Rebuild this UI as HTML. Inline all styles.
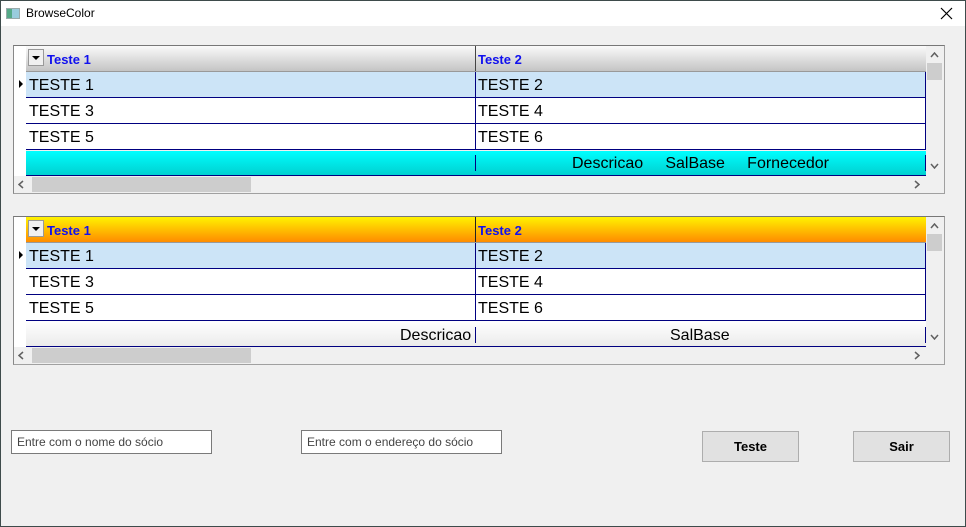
<!DOCTYPE html>
<html><head><meta charset="utf-8">
<style>
*{margin:0;padding:0;box-sizing:border-box}
body{width:966px;height:527px;overflow:hidden;background:#3e4b4b;font-family:"Liberation Sans",sans-serif;position:relative}
.win{position:absolute;left:1px;top:1px;width:964px;height:525px;background:#f0f0f0}
.title{position:absolute;left:0;top:0;width:964px;height:25px;background:#fff}
.title .ic{position:absolute;left:5px;top:7px;width:14px;height:11px;border:1px solid #9aa;background:linear-gradient(90deg,#5a8 0 40%,#9cd 40%)}
.title .t{position:absolute;left:25px;top:5px;font-size:12px;color:#000}
.a{position:absolute}
.grid{position:absolute;left:12px;width:932px;height:149px;border:1px solid #a0a0a0;border-top-color:#777;border-left-color:#888;background:#f0f0f0}
.ind{position:absolute;left:0;top:0;width:12px;height:130px;background:#fff}
.hdr{position:absolute;left:12px;top:0;width:912px;height:26px;border-bottom:1px solid #999}
.h1{background:linear-gradient(#fafafa,#c4c4c4)}
.h2{background:linear-gradient(#fff200,#ff8c00)}
.hl{position:absolute;top:6px;font-size:13px;font-weight:bold;color:#1010ee}
.dd{position:absolute;left:2px;top:3px;width:16px;height:17px;border:1px solid #999;background:#f0f0f0}
.dd:after{content:"";position:absolute;left:3px;top:6px;border-left:4px solid transparent;border-right:4px solid transparent;border-top:4px solid #000}
.row{position:absolute;left:12px;width:900px;height:26px;background:#fff;border-bottom:1px solid #000080;border-right:1px solid #000080}
.row.sel{background:#cce4f7}
.row span{position:absolute;top:5px;font-size:16px;color:#000}
.sep{position:absolute;left:449px;top:0;width:1px;height:100%;background:#000080}
.hs{position:absolute;left:0;top:130px;width:912px;height:17px;background:#f0f0f0}
.thumbh{position:absolute;left:18px;top:1px;width:219px;height:15px;background:#cdcdcd}
.vs{position:absolute;left:912px;top:0;width:18px;height:130px;background:#f0f0f0}
.thumbv{position:absolute;left:1px;top:17px;width:15px;height:17px;background:#cdcdcd}
.arr{position:absolute}
.inp{position:absolute;height:24px;width:201px;background:#fff;border:1px solid #7a7a7a;font-size:12px;color:#444;padding:4px 0 0 5px}
.btn{position:absolute;top:430px;width:97px;height:31px;background:#e1e1e1;border:1px solid #adadad;font-size:13px;font-weight:bold;text-align:center;line-height:29px;color:#000}
</style></head><body>
<div class="win">
<div class="title"><div class="ic"></div><div class="t">BrowseColor</div>
<svg class="a" style="left:939px;top:6px" width="13" height="13"><path d="M1 1L12 12M12 1L1 12" stroke="#000" stroke-width="1.2"/></svg></div>

<!-- grid 1 -->
<div class="grid" style="top:44px">
 <div class="ind"></div>
 <div class="hdr h1"><div class="dd"></div><div class="hl" style="left:21px">Teste 1</div><div class="sep" style="background:#444"></div><div class="hl" style="left:452px">Teste 2</div></div>
 <div class="a" style="left:5px;top:34px;border-top:4px solid transparent;border-bottom:4px solid transparent;border-left:4px solid #000"></div>
 <div class="row sel" style="top:26px"><span style="left:3px">TESTE 1</span><div class="sep"></div><span style="left:452px">TESTE 2</span></div>
 <div class="row" style="top:52px"><span style="left:3px">TESTE 3</span><div class="sep"></div><span style="left:452px">TESTE 4</span></div>
 <div class="row" style="top:78px"><span style="left:3px">TESTE 5</span><div class="sep"></div><span style="left:452px">TESTE 6</span></div>
 <div class="row" style="top:105px;height:25px;background:linear-gradient(#00ffff,#00d0d0);border-right:none;width:901px"><div class="sep" style="top:4px;height:16px"></div><div class="sep" style="left:899px;top:4px;height:16px"></div><span style="left:546px;top:4px">Descricao&nbsp;&nbsp;&nbsp;&nbsp;&nbsp;SalBase&nbsp;&nbsp;&nbsp;&nbsp;&nbsp;Fornecedor</span></div>
 <div class="hs"><svg class="arr" style="left:4px;top:4px" width="6" height="9"><path d="M5 1L1 4.5L5 8" stroke="#606060" stroke-width="1.5" fill="none"/></svg><div class="thumbh"></div><svg class="arr" style="left:900px;top:4px" width="6" height="9"><path d="M1 1L5 4.5L1 8" stroke="#606060" stroke-width="1.5" fill="none"/></svg></div>
 <div class="vs"><svg class="arr" style="left:4px;top:6px" width="9" height="6"><path d="M1 5L4.5 1L8 5" stroke="#606060" stroke-width="1.5" fill="none"/></svg><div class="thumbv"></div><svg class="arr" style="left:4px;top:117px" width="9" height="6"><path d="M1 1L4.5 5L8 1" stroke="#606060" stroke-width="1.5" fill="none"/></svg></div>
</div>

<!-- grid 2 -->
<div class="grid" style="top:215px">
 <div class="ind"></div>
 <div class="hdr h2"><div class="dd"></div><div class="hl" style="left:21px">Teste 1</div><div class="sep" style="background:#222"></div><div class="hl" style="left:452px">Teste 2</div></div>
 <div class="a" style="left:5px;top:34px;border-top:4px solid transparent;border-bottom:4px solid transparent;border-left:4px solid #000"></div>
 <div class="row sel" style="top:26px"><span style="left:3px">TESTE 1</span><div class="sep"></div><span style="left:452px">TESTE 2</span></div>
 <div class="row" style="top:52px"><span style="left:3px">TESTE 3</span><div class="sep"></div><span style="left:452px">TESTE 4</span></div>
 <div class="row" style="top:78px"><span style="left:3px">TESTE 5</span><div class="sep"></div><span style="left:452px">TESTE 6</span></div>
 <div class="row" style="top:104px;height:26px;background:linear-gradient(#fff,#ebebeb);border-right:none;width:901px"><div class="sep" style="top:6px;height:16px"></div><div class="sep" style="left:899px;top:6px;height:16px"></div><span style="left:374px;top:6px">Descricao</span><span style="left:644px;top:6px">SalBase</span></div>
 <div class="hs"><svg class="arr" style="left:4px;top:4px" width="6" height="9"><path d="M5 1L1 4.5L5 8" stroke="#606060" stroke-width="1.5" fill="none"/></svg><div class="thumbh"></div><svg class="arr" style="left:900px;top:4px" width="6" height="9"><path d="M1 1L5 4.5L1 8" stroke="#606060" stroke-width="1.5" fill="none"/></svg></div>
 <div class="vs"><svg class="arr" style="left:4px;top:6px" width="9" height="6"><path d="M1 5L4.5 1L8 5" stroke="#606060" stroke-width="1.5" fill="none"/></svg><div class="thumbv"></div><svg class="arr" style="left:4px;top:117px" width="9" height="6"><path d="M1 1L4.5 5L8 1" stroke="#606060" stroke-width="1.5" fill="none"/></svg></div>
</div>

<div class="inp" style="left:10px;top:429px">Entre com o nome do sócio</div>
<div class="inp" style="left:300px;top:429px">Entre com o endereço do sócio</div>
<div class="btn" style="left:701px">Teste</div>
<div class="btn" style="left:852px">Sair</div>
</div>
</body></html>
